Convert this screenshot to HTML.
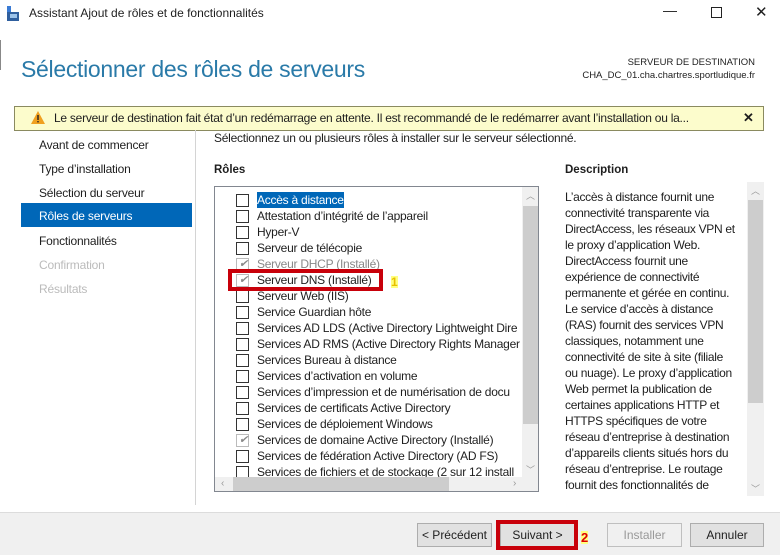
<!DOCTYPE html>
<html><head><meta charset="utf-8"><style>
*{margin:0;padding:0;box-sizing:border-box}
body{width:780px;height:555px;background:#fff;font-family:"Liberation Sans",sans-serif;font-size:12px;color:#1e1e1e;position:relative;overflow:hidden}
.a{position:absolute;white-space:nowrap}
.nav{left:39px;font-size:12px;letter-spacing:-0.2px}
.row{position:absolute;left:236px;height:16px;white-space:nowrap;font-size:12px;letter-spacing:-0.25px}
.cb{position:absolute;left:0;top:2px;width:13px;height:13px;border:1px solid #333;background:#fff}
.cb.d{border-color:#bbb}
.row span{position:absolute;left:21px;top:1px}
.chk{position:absolute;left:2px;top:-2px;color:#888;font-size:11px}
.btn{position:absolute;top:523px;height:24px;border:1px solid #adadad;background:#e1e1e1;text-align:center;line-height:22px;font-size:12px}
.desc{left:565px;line-height:16px;font-size:12px;letter-spacing:-0.3px}
</style></head><body>
<div class="a" style="left:0;top:0;width:780px;height:28px;background:#fff"></div>
<svg class="a" style="left:6px;top:6px" width="14" height="16"><rect x="1" y="0" width="4" height="6" fill="#3a7bd5"/><rect x="1" y="6" width="12" height="9" fill="#2f5f9e"/><rect x="4" y="8" width="7" height="4" fill="#9cc3ea"/></svg>
<div class="a" style="left:29px;top:6px;font-size:12px">Assistant Ajout de rôles et de fonctionnalités</div>
<div class="a" style="left:663px;top:2px;font-size:14px">—</div>
<div class="a" style="left:711px;top:7px;width:11px;height:11px;border:1px solid #222"></div>
<div class="a" style="left:755px;top:3px;font-size:15px">✕</div>
<div class="a" style="left:0;top:40px;width:1px;height:30px;background:#888"></div>
<div class="a" style="left:21px;top:56px;font-size:23px;color:#2a7aa8;letter-spacing:-0.3px">Sélectionner des rôles de serveurs</div>
<div class="a" style="right:25px;top:56px;font-size:9.5px;text-align:right;line-height:13px">SERVEUR DE DESTINATION<br>CHA_DC_01.cha.chartres.sportludique.fr</div>
<div class="a" style="left:14px;top:106px;width:750px;height:25px;background:#fcfccc;border:1px solid #8a8a60"></div>
<svg class="a" style="left:31px;top:111px" width="14" height="13"><path d="M7 0L14 13H0Z" fill="#f0a020"/><rect x="6.3" y="4" width="1.4" height="5" fill="#222"/><rect x="6.3" y="10" width="1.4" height="1.4" fill="#222"/></svg>
<div class="a" style="left:54px;top:111px;font-size:12px;letter-spacing:-0.25px">Le serveur de destination fait état d’un redémarrage en attente. Il est recommandé de le redémarrer avant l’installation ou la...</div>
<div class="a" style="left:743px;top:110px;font-size:13px;font-weight:bold">✕</div>
<div class="a" style="left:195px;top:130px;width:1px;height:375px;background:#d4d4d4"></div>
<div class="a nav" style="top:138px">Avant de commencer</div>
<div class="a nav" style="top:162px">Type d’installation</div>
<div class="a nav" style="top:186px">Sélection du serveur</div>
<div class="a" style="left:21px;top:203px;width:171px;height:24px;background:#0067b8"></div>
<div class="a nav" style="top:209px;color:#fff">Rôles de serveurs</div>
<div class="a nav" style="top:234px">Fonctionnalités</div>
<div class="a nav" style="top:258px;color:#bbb">Confirmation</div>
<div class="a nav" style="top:282px;color:#bbb">Résultats</div>
<div class="a" style="left:214px;top:131px;letter-spacing:-0.25px">Sélectionnez un ou plusieurs rôles à installer sur le serveur sélectionné.</div>
<div class="a" style="left:214px;top:164px;font-weight:bold;font-size:11.5px">Rôles</div>
<div class="a" style="left:565px;top:164px;font-weight:bold;font-size:11.5px">Description</div>
<div class="a" style="left:214px;top:186px;width:325px;height:306px;border:1px solid #828790;overflow:hidden">
<div style="position:absolute;left:21px;top:279px;width:13px;height:13px;border:1px solid #333"></div>
<div style="position:absolute;left:42px;top:278px;font-size:12px;letter-spacing:-0.25px;white-space:nowrap">Services de fichiers et de stockage (2 sur 12 install</div>
<div style="position:absolute;left:307px;top:0;width:17px;height:290px;background:#f0f0f0"></div>
<div style="position:absolute;left:308px;top:19px;width:15px;height:218px;background:#cdcdcd"></div>
<div style="position:absolute;left:311px;top:2px;font-size:9px;color:#999">︿</div>
<div style="position:absolute;left:311px;top:276px;font-size:9px;color:#999">﹀</div>
<div style="position:absolute;left:0;top:290px;width:324px;height:15px;background:#f0f0f0"></div>
<div style="position:absolute;left:18px;top:290px;width:216px;height:15px;background:#cdcdcd"></div>
<div style="position:absolute;left:6px;top:291px;font-size:10px;color:#999">‹</div>
<div style="position:absolute;left:298px;top:291px;font-size:10px;color:#999">›</div>
</div>
<div class="row" style="top:192px"><div class="cb"></div><span style="background:#0067b8;color:#fff;top:0;padding:1px 0">Accès à distance</span></div>
<div class="row" style="top:208px"><div class="cb"></div><span>Attestation d’intégrité de l’appareil</span></div>
<div class="row" style="top:224px"><div class="cb"></div><span>Hyper-V</span></div>
<div class="row" style="top:240px"><div class="cb"></div><span>Serveur de télécopie</span></div>
<div class="row" style="top:256px"><div class="cb d"><i class="chk">✔</i></div><span style="color:#888">Serveur DHCP (Installé)</span></div>
<div class="row" style="top:272px"><div class="cb d"><i class="chk">✔</i></div><span>Serveur DNS (Installé)</span></div>
<div class="row" style="top:288px"><div class="cb"></div><span>Serveur Web (IIS)</span></div>
<div class="row" style="top:304px"><div class="cb"></div><span>Service Guardian hôte</span></div>
<div class="row" style="top:320px"><div class="cb"></div><span>Services AD LDS (Active Directory Lightweight Dire</span></div>
<div class="row" style="top:336px"><div class="cb"></div><span>Services AD RMS (Active Directory Rights Manager</span></div>
<div class="row" style="top:352px"><div class="cb"></div><span>Services Bureau à distance</span></div>
<div class="row" style="top:368px"><div class="cb"></div><span>Services d’activation en volume</span></div>
<div class="row" style="top:384px"><div class="cb"></div><span>Services d’impression et de numérisation de docu</span></div>
<div class="row" style="top:400px"><div class="cb"></div><span>Services de certificats Active Directory</span></div>
<div class="row" style="top:416px"><div class="cb"></div><span>Services de déploiement Windows</span></div>
<div class="row" style="top:432px"><div class="cb d"><i class="chk">✔</i></div><span>Services de domaine Active Directory (Installé)</span></div>
<div class="row" style="top:448px"><div class="cb"></div><span>Services de fédération Active Directory (AD FS)</span></div>
<div class="a" style="left:228px;top:269px;width:155px;height:22px;border:4px solid #c8000a"></div>
<div class="a" style="left:391px;top:276px;color:#e8c000;font-weight:bold;font-size:12px;background:#ffff80;line-height:12px">1</div>
<div class="a desc" style="top:189px">L’accès à distance fournit une<br>connectivité transparente via<br>DirectAccess, les réseaux VPN et<br>le proxy d’application Web.<br>DirectAccess fournit une<br>expérience de connectivité<br>permanente et gérée en continu.<br>Le service d’accès à distance<br>(RAS) fournit des services VPN<br>classiques, notamment une<br>connectivité de site à site (filiale<br>ou nuage). Le proxy d’application<br>Web permet la publication de<br>certaines applications HTTP et<br>HTTPS spécifiques de votre<br>réseau d’entreprise à destination<br>d’appareils clients situés hors du<br>réseau d’entreprise. Le routage<br>fournit des fonctionnalités de</div>
<div class="a" style="left:747px;top:182px;width:17px;height:314px;background:#f0f0f0"></div>
<div class="a" style="left:748px;top:200px;width:15px;height:203px;background:#cdcdcd"></div>
<div class="a" style="left:751px;top:184px;font-size:9px;color:#999">︿</div>
<div class="a" style="left:751px;top:482px;font-size:9px;color:#999">﹀</div>
<div class="a" style="left:0;top:512px;width:780px;height:43px;background:#f0f0f0;border-top:1px solid #dcdcdc"></div>
<div class="btn" style="left:417px;width:75px">&lt; Précédent</div>
<div class="btn" style="left:500px;width:75px">Suivant &gt;</div>
<div class="a" style="left:496px;top:520px;width:82px;height:30px;border:4px solid #c8000a"></div>
<div class="a" style="left:581px;top:531px;color:#d00;font-weight:bold;font-size:13px;background:#ffff80;line-height:13px">2</div>
<div class="btn" style="left:607px;width:75px;background:#f0f0f0;border-color:#bfbfbf;color:#999">Installer</div>
<div class="btn" style="left:690px;width:74px">Annuler</div>
</body></html>
